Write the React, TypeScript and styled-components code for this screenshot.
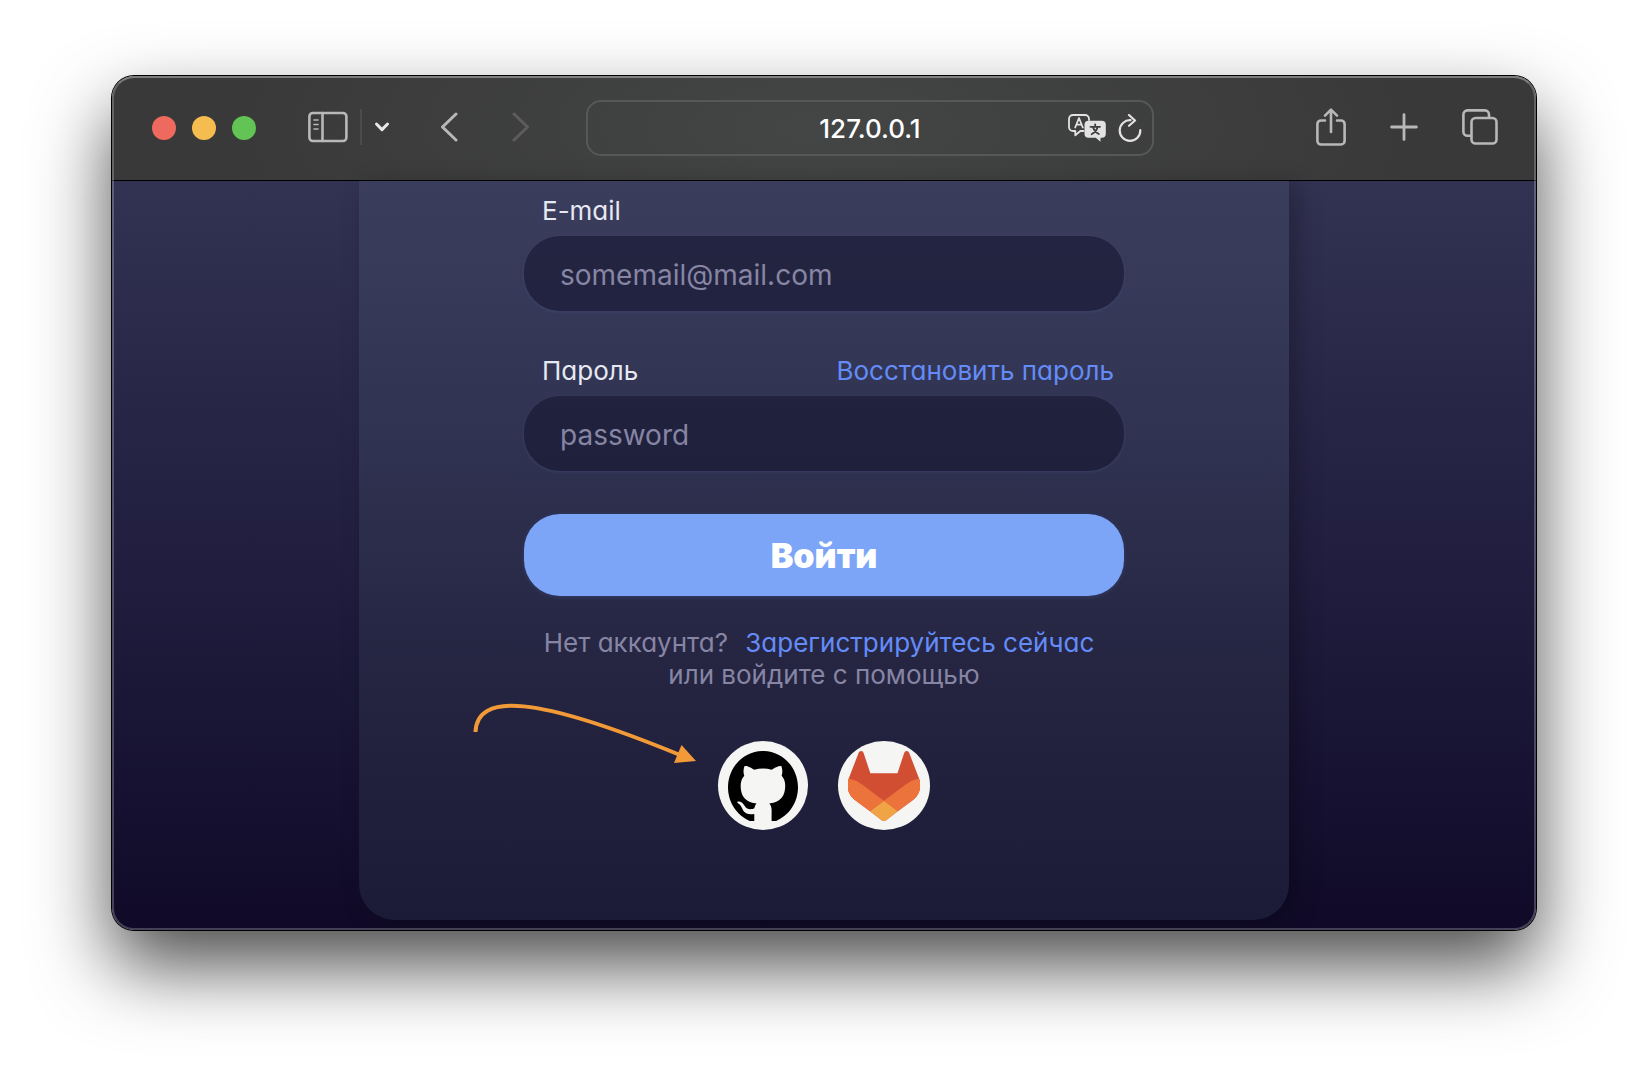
import React from "react";
import styled, { createGlobalStyle } from "styled-components";

const GlobalStyle = createGlobalStyle`
  *, *::before, *::after { box-sizing: border-box; }
  body { margin: 0; background: #fff; font-family: Inter, "Noto Sans", sans-serif; }
  button { font: inherit; padding: 0; border: 0; background: none; cursor: pointer; }
  a { text-decoration: none; }
  svg { display: block; flex: none; }
`;

const Desktop = styled.div`
  padding: 76px 112px 148px;
`;

const BrowserWindow = styled.div`
  position: relative;
  overflow: hidden;
  border-radius: 22px;
  box-shadow: 0 0 0 1px #000, 0 36px 76px rgba(0, 0, 0, 0.7);

  &::after {
    content: "";
    position: absolute;
    inset: 0;
    border-radius: 22px;
    border: 2px solid rgba(255, 255, 255, 0.22);
    border-top-color: rgba(255, 255, 255, 0.34);
    pointer-events: none;
  }
`;

const Toolbar = styled.header`
  display: flex;
  align-items: center;
  height: 105px;
  padding: 0 38px 0 40px;
  background: radial-gradient(ellipse 600px 220px at 50% 50%, #444545, #393939);
  border-bottom: 1px solid #000;
`;

const TrafficLights = styled.div`
  display: flex;
  gap: 16px;
  margin-right: 52px;
`;

const Light = styled.button<{ $color: string }>`
  width: 24px;
  height: 24px;
  border-radius: 50%;
  background: ${(p) => p.$color};
`;

const Tools = styled.div<{ $gap: number }>`
  display: flex;
  align-items: center;
  gap: ${(p) => p.$gap}px;
`;

const ToolbarTools = styled(Tools)`
  padding-bottom: 2px;
`;

const NavTools = styled(ToolbarTools)`
  margin-left: 50px;
`;

const Divider = styled.span`
  width: 2px;
  height: 36px;
  background: #4b4b4b;
`;

const IconButton = styled.button<{ $color?: string }>`
  display: flex;
  color: ${(p) => p.$color ?? "#b8b8b8"};
`;

const AddressBar = styled.div`
  display: grid;
  grid-template-columns: 74px 1fr 74px;
  align-items: center;
  flex: 1;
  min-width: 240px;
  height: 56px;
  margin: 0 162px 0 56px;
  padding: 0 10px;
  border: 2px solid #565757;
  border-radius: 15px;
`;

const AddressInput = styled.input`
  grid-column: 2;
  width: 100%;
  min-width: 0;
  padding: 2px 0 0;
  border: 0;
  outline: 0;
  background: none;
  color: #fff;
  font: 500 26px/32px Inter, sans-serif;
  text-align: center;
`;

const Page = styled.main`
  padding: 0 24px 10px;
  background: linear-gradient(#323252, #211e3f 50%, #100a28);
`;

const Card = styled.section`
  max-width: 930px;
  margin: 0 auto;
  padding: 13px 24px 90px;
  border-radius: 0 0 36px 36px;
  background: linear-gradient(#3b3d5d, #313553 30%, #252542 66%, #1b1a37);
  box-shadow: 8px 4px 24px rgba(0, 0, 0, 0.25);
`;

const Form = styled.form`
  display: flex;
  flex-direction: column;
  gap: 43px;
  max-width: 600px;
  margin: 0 auto;
`;

const Field = styled.div`
  display: flex;
  flex-direction: column;
  gap: 8px;
`;

const LabelRow = styled.div`
  display: flex;
  justify-content: space-between;
  padding: 0 10px 0 18px;
  font-size: 26px;
  line-height: 34px;
  font-feature-settings: "cv11";
`;

const Label = styled.label`
  color: #e6e8f2;
`;

const Link = styled.a`
  color: #648cf8;
`;

const TextInput = styled.input`
  width: 100%;
  height: 75px;
  padding: 2px 36px 0;
  border: 0;
  outline: 0;
  border-radius: 36px;
  background: rgba(22, 22, 48, 0.6);
  box-shadow: 0 1px 3px 1px rgba(80, 88, 140, 0.25);
  color: #e6e8f2;
  font: 400 28px/34px Inter, sans-serif;

  &::placeholder { color: #8785a4; opacity: 1; }
`;

const SubmitButton = styled.button`
  height: 82px;
  padding-top: 2px;
  border-radius: 36px;
  background: #7ca5f8;
  box-shadow: 0 1px 4px rgba(80, 110, 190, 0.3);
  color: #fff;
  font-size: 34px;
  font-weight: 900;
  line-height: 40px;
`;

const Hint = styled.p`
  margin: 31px 0 0;
  color: #8785a4;
  font-size: 26px;
  line-height: 32px;
  text-align: center;
  font-feature-settings: "cv11";

  a { margin: 0 10px; }
`;

const SocialRow = styled.div`
  position: relative;
  display: flex;
  justify-content: center;
  gap: 30px;
  max-width: 600px;
  margin: 50px auto 0;
`;

const SocialButton = styled.button`
  display: flex;
  align-items: center;
  justify-content: center;
  height: 89px;
  padding: 0 10px;
  border-radius: 50%;
  background: #f5f5f3;
`;

const ArrowNote = styled.svg`
  position: absolute;
  top: -40px;
  right: 426px;
`;

const stroke = {
  fill: "none",
  stroke: "currentColor",
  strokeWidth: 2.6,
  strokeLinecap: "round" as const,
  strokeLinejoin: "round" as const,
};

const SidebarIcon = () => (
  <svg width="40" height="32" viewBox="0 0 40 32" {...stroke}>
    <rect x="1.4" y="2" width="37" height="28" rx="3.5" />
    <path d="M14.5 2v28" />
    <path d="M6 9h4M6 13.500h4M6 18h4" strokeWidth="1.6" />
  </svg>
);

const ChevronDown = () => (
  <svg width="16" height="12" viewBox="0 0 16 12" {...stroke} strokeWidth="3">
    <path d="M2.5 3 8 8.6 13.5 3" />
  </svg>
);

const BackIcon = () => (
  <svg width="18" height="30" viewBox="0 0 18 30" {...stroke} strokeWidth="3">
    <path d="M16 2 2.5 15 16 28" />
  </svg>
);

const ForwardIcon = () => (
  <svg width="18" height="30" viewBox="0 0 18 30" {...stroke} strokeWidth="3">
    <path d="M2 2l13.500 13L2 28" />
  </svg>
);

const TranslateIcon = () => (
  <svg width="38" height="28" viewBox="0 0 38 28" {...stroke} strokeWidth="1.8">
    <path d="M15.5 17h-3.200l-5 4.300V17H5a4 4 0 0 1-4-4V5a4 4 0 0 1 4-4h12a4 4 0 0 1 4 4v1" />
    <path d="M7.2 13.500 11 4l3.800 9.500M8.500 10.600h5" />
    <path
      d="M20.5 6.800h13.300a4 4 0 0 1 4 4v9a4 4 0 0 1-4 4h-1.300v4l-4.700-4h-7.300a4 4 0 0 1-4-4v-9a4 4 0 0 1 4-4Z"
      fill="currentColor"
      stroke="none"
    />
    <path
      d="M22.500 12.800h9.500M27.200 10.400v2.400M23.600 20.200c3-1.600 5.200-4 6-7.200M24.800 13c1.200 3.200 3.300 5.600 6 7"
      stroke="#3f4040"
    />
  </svg>
);

const ReloadIcon = () => (
  <svg width="24" height="28" viewBox="0 0 24 28" {...stroke} strokeWidth="2.2">
    <path d="M12.500 6.200A10.300 10.300 0 1 0 22.300 16.200" />
    <path d="M11 1l6 5.500-6 5.300" />
  </svg>
);

const ShareIcon = () => (
  <svg width="30" height="38" viewBox="0 0 30 38" {...stroke}>
    <path d="M9 12.500H5A3.600 3.600 0 0 0 1.400 16v17A3.600 3.600 0 0 0 5 36.500h20a3.600 3.600 0 0 0 3.600-3.600V16a3.600 3.600 0 0 0-3.600-3.500h-4" />
    <path d="M15 24V2M9 7.600 15 1.600l6 6" />
  </svg>
);

const PlusIcon = () => (
  <svg width="28" height="28" viewBox="0 0 28 28" {...stroke} strokeWidth="2.8">
    <path d="M14 1.600v24.800M1.600 14h24.800" />
  </svg>
);

const TabsIcon = () => (
  <svg width="36" height="36" viewBox="0 0 36 36" {...stroke}>
    <rect x="9.500" y="9" width="25" height="25.500" rx="4" />
    <path d="M8.500 26.800H5.400a4 4 0 0 1-4-4V5.400a4 4 0 0 1 4-4H23a4 4 0 0 1 4 4V8" />
  </svg>
);

const GithubLogo = () => (
  <svg width="70" height="70" viewBox="0 0.3 24 23.1" preserveAspectRatio="none">
    <path d="M12 .297c-6.630 0-12 5.373-12 12 0 5.303 3.438 9.800 8.205 11.385.6.113.82-.258.82-.577 0-.285-.01-1.040-.015-2.040-3.338.724-4.042-1.610-4.042-1.610C4.422 18.070 3.633 17.700 3.633 17.700c-1.087-.744.084-.729.084-.729 1.205.084 1.838 1.236 1.838 1.236 1.070 1.835 2.809 1.305 3.495.998.108-.776.417-1.305.76-1.605-2.665-.3-5.466-1.332-5.466-5.930 0-1.310.465-2.380 1.235-3.220-.135-.303-.54-1.523.105-3.176 0 0 1.005-.322 3.300 1.230.96-.267 1.980-.399 3-.405 1.020.006 2.040.138 3 .405 2.280-1.552 3.285-1.230 3.285-1.230.645 1.653.24 2.873.12 3.176.765.840 1.230 1.910 1.230 3.220 0 4.610-2.805 5.625-5.475 5.920.42.360.81 1.096.81 2.220 0 1.606-.015 2.896-.015 3.286 0 .315.21.690.825.570C20.565 22.092 24 17.592 24 12.297c0-6.627-5.373-12-12-12" />
  </svg>
);

const GitlabLogo = () => (
  <svg width="72" height="70" viewBox="0.2 0 24.6 24" preserveAspectRatio="none">
    <path
      fill="#d14e33"
      d="M24.507 9.500l-.034-.09L21.082.562a.896.896 0 0 0-1.694.091l-2.290 7.010H7.825L5.535.653a.898.898 0 0 0-1.694-.09L.451 9.411.416 9.500a6.297 6.297 0 0 0 2.090 7.278l.012.010.03.022 5.160 3.867 2.560 1.935 1.554 1.176a1.051 1.051 0 0 0 1.268 0l1.555-1.176 2.560-1.935 5.197-3.890.014-.010A6.297 6.297 0 0 0 24.507 9.500z"
    />
    <path
      fill="#ec733c"
      d="M24.507 9.500l-.034-.09a11.440 11.440 0 0 0-4.560 2.051l-7.447 5.632 4.742 3.584 5.197-3.890.014-.010A6.297 6.297 0 0 0 24.507 9.500z"
    />
    <path
      fill="#f0a446"
      d="M7.707 20.677l2.560 1.935 1.555 1.176a1.051 1.051 0 0 0 1.268 0l1.555-1.176 2.560-1.935-4.743-3.584-4.755 3.584z"
    />
    <path
      fill="#ec733c"
      d="M5.010 11.461a11.430 11.430 0 0 0-4.560-2.050L.416 9.500a6.297 6.297 0 0 0 2.090 7.278l.012.010.03.022 5.160 3.867 4.745-3.584-7.444-5.632z"
    />
  </svg>
);

export default function App() {
  return (
    <>
      <GlobalStyle />
      <Desktop>
        <BrowserWindow>
          <Toolbar>
            <TrafficLights>
              <Light $color="#ee6a5f" aria-label="Close" />
              <Light $color="#f5bd4f" aria-label="Minimize" />
              <Light $color="#61c454" aria-label="Zoom" />
            </TrafficLights>
            <ToolbarTools $gap={12}>
              <IconButton aria-label="Sidebar"><SidebarIcon /></IconButton>
              <Divider />
              <IconButton $color="#e8e8e8" aria-label="Tab groups"><ChevronDown /></IconButton>
            </ToolbarTools>
            <NavTools $gap={54}>
              <IconButton aria-label="Back"><BackIcon /></IconButton>
              <IconButton $color="#5d5d5e" aria-label="Forward"><ForwardIcon /></IconButton>
            </NavTools>
            <AddressBar>
              <AddressInput aria-label="Address" defaultValue="127.0.0.1" />
              <Tools $gap={12}>
                <IconButton $color="#e2e2e2" aria-label="Translate"><TranslateIcon /></IconButton>
                <IconButton $color="#e2e2e2" aria-label="Reload"><ReloadIcon /></IconButton>
              </Tools>
            </AddressBar>
            <ToolbarTools $gap={44}>
              <IconButton aria-label="Share"><ShareIcon /></IconButton>
              <IconButton aria-label="New tab"><PlusIcon /></IconButton>
              <IconButton aria-label="Tab overview"><TabsIcon /></IconButton>
            </ToolbarTools>
          </Toolbar>
          <Page>
            <Card>
              <Form onSubmit={(e) => e.preventDefault()}>
                <Field>
                  <LabelRow>
                    <Label htmlFor="email">E-mail</Label>
                  </LabelRow>
                  <TextInput id="email" type="email" placeholder="somemail@mail.com" />
                </Field>
                <Field>
                  <LabelRow>
                    <Label htmlFor="password">Пароль</Label>
                    <Link href="#restore">Восстановить пароль</Link>
                  </LabelRow>
                  <TextInput id="password" type="password" placeholder="password" />
                </Field>
                <SubmitButton type="submit">Войти</SubmitButton>
              </Form>
              <Hint>
                Нет аккаунта? <Link href="#register">Зарегистрируйтесь сейчас</Link>
                <br />
                или войдите с помощью
              </Hint>
              <SocialRow>
                <SocialButton aria-label="GitHub"><GithubLogo /></SocialButton>
                <SocialButton aria-label="GitLab"><GitlabLogo /></SocialButton>
                <ArrowNote width="226" height="64" viewBox="0 0 226 64" fill="none">
                  <path d="M3.5 31C5 -8 62 -6 208 54" stroke="#f29a38" strokeWidth="4" />
                  <path d="M209.5 44 224 60l-22 2z" fill="#f29a38" />
                </ArrowNote>
              </SocialRow>
            </Card>
          </Page>
        </BrowserWindow>
      </Desktop>
    </>
  );
}
